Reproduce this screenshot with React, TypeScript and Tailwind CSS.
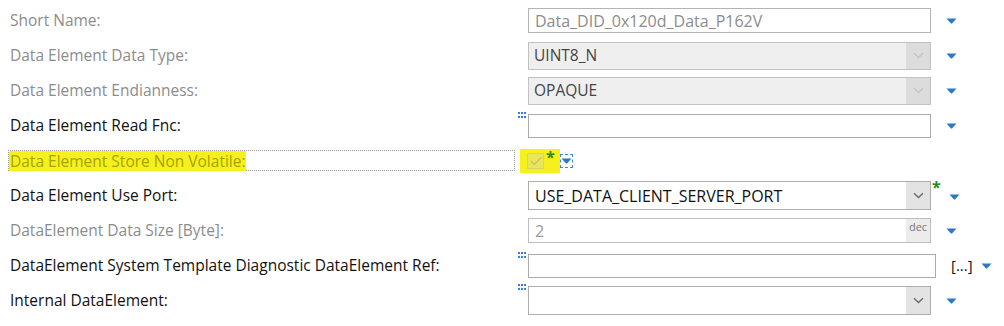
import React from "react";

const font = { fontFamily: '"Open Sans", "Noto Sans", "Liberation Sans", sans-serif' };

function BlueArrow() {
  return (
    <svg width="11" height="6" viewBox="0 0 11 6" className="block">
      <path d="M0.5 0.5 L10.5 0.5 L6 5.5 L5 5.5 Z" fill="#2b78c8" />
    </svg>
  );
}

function Chevron({ color = "#777" }: { color?: string }) {
  return (
    <svg width="11" height="7" viewBox="0 0 11 7" className="block">
      <path d="M1 1.2 L5.5 5.5 L10 1.2" fill="none" stroke={color} strokeWidth="1.4" />
    </svg>
  );
}

function SmallIcon() {
  return (
    <div className="absolute left-[-11px] top-[-3px] w-[8px] h-[7px] grid grid-cols-3 gap-[1px]">
      {Array.from({ length: 6 }).map((_, i) => (
        <div key={i} className="w-[2px] h-[2px] bg-[#3d7fd6]" />
      ))}
    </div>
  );
}

function Star({ className }: { className?: string }) {
  return (
    <span className={"text-[#2b8a1e] font-bold text-[16px] leading-none " + (className ?? "")}>*</span>
  );
}

function Label({ text, dark }: { text: string; dark?: boolean }) {
  return (
    <div className="w-[528px] shrink-0 pl-[10px]">
      <span className={"text-[15.5px] " + (dark ? "text-[#111]" : "text-[#8c8c8c]")}>{text}</span>
    </div>
  );
}

export default function App() {
  return (
    <div className="w-[1004px] h-[326px] bg-white pt-[3px] overflow-hidden" style={font}>
      {/* Short name */}
      <div className="flex items-center h-[35px]">
        <Label text="Short Name:" />
        <div className="w-[403px] h-[25px] border border-[#b4b4b4] bg-white flex items-center px-[6px] text-[16px] text-[#8c8c8c]">
          Data_DID_0x120d_Data_P162V
        </div>
        <div className="ml-[15px]"><BlueArrow /></div>
      </div>

      {/* Data Type */}
      <div className="flex items-center h-[35px]">
        <Label text="Data Element Data Type:" />
        <div className="w-[403px] h-[28px] border border-[#c2c2c2] bg-[#efefef] flex items-center text-[15.5px] text-[#444]">
          <div className="flex-1 px-[5px]">UINT8_N</div>
          <div className="w-[24px] h-full bg-[#dcdcdc] flex items-center justify-center"><Chevron color="#c4c4c4" /></div>
        </div>
        <div className="ml-[15px]"><BlueArrow /></div>
      </div>

      {/* Endianness */}
      <div className="flex items-center h-[35px]">
        <Label text="Data Element Endianness:" />
        <div className="w-[403px] h-[28px] border border-[#c2c2c2] bg-[#efefef] flex items-center text-[15.5px] text-[#444]">
          <div className="flex-1 px-[5px]">OPAQUE</div>
          <div className="w-[24px] h-full bg-[#dcdcdc] flex items-center justify-center"><Chevron color="#c4c4c4" /></div>
        </div>
        <div className="ml-[15px]"><BlueArrow /></div>
      </div>

      {/* Read Fnc */}
      <div className="flex items-center h-[35px]">
        <Label text="Data Element Read Fnc:" dark />
        <div className="relative w-[403px] h-[24px] border border-[#ababab] bg-white">
          <SmallIcon />
        </div>
        <div className="ml-[15px]"><BlueArrow /></div>
      </div>

      {/* Store Non Volatile */}
      <div className="flex items-center h-[35px]">
        <div className="w-[520px] shrink-0 pl-[8px]">
          <div className="w-[507px] h-[21px] border border-dotted border-[#9a9a9a] flex items-center">
            <span className="text-[15.5px] text-[#a6a200] bg-[#f6f11c] pl-[1px] h-[20px] leading-[20px]">Data Element Store Non Volatile:</span>
          </div>
        </div>
        <div className="flex items-start bg-[#f6f11c] h-[24px] w-[40px] pl-[7px] pt-[4px]">
          <div className="w-[17px] h-[16px] border border-[#d8d470] bg-[#eae55a] flex items-center justify-center">
            <svg width="12" height="10" viewBox="0 0 12 10"><path d="M1 5 L4.5 8.5 L11 1.5" fill="none" stroke="#c9c46a" strokeWidth="1.4" /></svg>
          </div>
          <Star className="ml-[2px] mt-[-4px]" />
        </div>
        <div className="w-[13px] h-[14px] border border-dashed border-[#4a86d8] flex items-center justify-center">
          <BlueArrow />
        </div>
      </div>

      {/* Use Port */}
      <div className="flex items-center h-[35px]">
        <Label text="Data Element Use Port:" dark />
        <div className="w-[403px] h-[29px] border border-[#adadad] bg-white flex items-center text-[16px] text-[#111]">
          <div className="flex-1 px-[6px]">USE_DATA_CLIENT_SERVER_PORT</div>
          <div className="w-[24px] h-full bg-[#e3e3e3] flex items-center justify-center"><Chevron color="#6a6a6a" /></div>
        </div>
        <Star className="self-start mt-[1px] ml-[1px]" />
        <div className="ml-[8px] mt-[2px]"><BlueArrow /></div>
      </div>

      {/* Data size */}
      <div className="flex items-center h-[35px]">
        <Label text="DataElement Data Size [Byte]:" />
        <div className="w-[403px] h-[25px] border border-[#bdbdbd] bg-white flex items-center text-[16px] text-[#9a9a9a]">
          <div className="flex-1 px-[6px]">2</div>
          <div className="w-[24px] h-full bg-[#ececec] flex items-start justify-center text-[11px] text-[#777] leading-[14px] pt-[1px]">dec</div>
        </div>
        <div className="ml-[15px]"><BlueArrow /></div>
      </div>

      {/* Template Ref */}
      <div className="flex items-center h-[35px]">
        <Label text="DataElement System Template Diagnostic DataElement Ref:" dark />
        <div className="relative w-[408px] h-[24px] border border-[#ababab] bg-white">
          <SmallIcon />
        </div>
        <div className="ml-[15px] text-[15px] text-[#111]">[...]</div>
        <div className="ml-[8px]"><BlueArrow /></div>
      </div>

      {/* Internal */}
      <div className="flex items-center h-[35px]">
        <Label text="Internal DataElement:" dark />
        <div className="relative w-[403px] h-[29px] border border-[#adadad] bg-white flex items-center">
          <SmallIcon />
          <div className="flex-1" />
          <div className="w-[24px] h-full bg-[#e3e3e3] flex items-center justify-center"><Chevron color="#6a6a6a" /></div>
        </div>
        <div className="ml-[15px]"><BlueArrow /></div>
      </div>
    </div>
  );
}
